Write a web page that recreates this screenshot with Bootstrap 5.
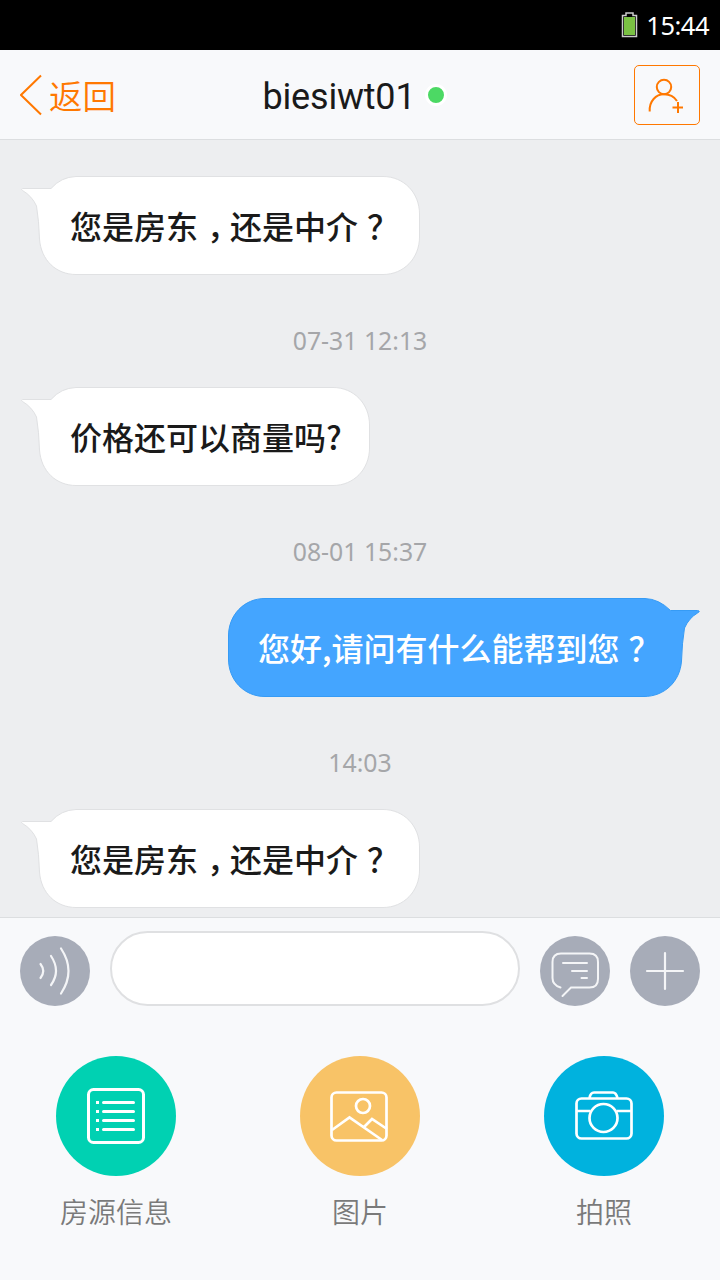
<!DOCTYPE html>
<html lang="zh-CN">
<head>
<meta charset="utf-8">
<meta name="viewport" content="width=device-width, initial-scale=1">
<title>biesiwt01</title>
<link rel="stylesheet" href="https://cdn.jsdelivr.net/npm/bootstrap@5.3.0/dist/css/bootstrap.min.css">
<style>
body{font-family:"Noto Sans","Noto Sans CJK SC",sans-serif;color:#1a1a1a;background:#f8f9fb}
.screen{width:720px;height:1280px}
.status{height:50px;font-size:25.5px;line-height:50px;padding-right:11px}
.clock{letter-spacing:-.5px}
.topbar{height:90px;background:#f8f9fb;border-bottom:1px solid #dcdee0}
.side{width:120px}
.back{color:#ff7800;font:350 33.5px/1 "Noto Sans CJK SC",sans-serif}
.back span{margin-left:3px}
.who{font:36px/1 Roboto,sans-serif;padding-top:4px;letter-spacing:-.2px}
.online{width:22px;height:22px;background:#4cd964;border:3px solid #fff;margin-left:10px}
.title{margin-right:10px}
.addbtn{width:66px;height:60px;border:1px solid #ff7800;border-radius:5px;color:#ff7800}
.chat{height:777px;background:#edeef0;padding:36px 20px 0}
.bubble{height:99px;font:500 32px/99px "Noto Sans CJK SC",sans-serif;white-space:nowrap}
.bubble svg{z-index:0}
.bubble>span{position:relative;z-index:1}
.bubble-in{padding-left:50px}
.bubble-out{padding-left:30px;color:#fff;width:472px}
.mid{font-feature-settings:"halt";margin:0 7px 0 9px}
.ask{margin-left:9px}
.stamp{height:112px;font-size:24.800px;line-height:130px;color:#a5a6a9}
.composer{height:106px;background:#f8f9fb;border-top:1px solid #dcdee0;padding:0 20px}
.tool{width:70px;height:70px;background:#a7acb8}
.entry{width:410px;height:75px;border:2px solid #dfe0e2;border-radius:38px;background:#fff;margin-bottom:4px}
.actions{padding:33px 56px 0}
.action{width:120px}
.disc{width:120px;height:120px}
.caption-text{font:350 28px/40px "Noto Sans CJK SC",sans-serif;color:#7a7a7a;margin-top:15px;white-space:nowrap}
svg{display:block;fill:none}
</style>
</head>
<body>
<div class="screen d-flex flex-column overflow-hidden">
  <div class="status bg-black text-white d-flex align-items-center justify-content-end flex-shrink-0">
    <svg class="me-2" width="17" height="26" viewBox="0 0 17 26"><path d="M1.500 3.5H5V1H12V3.5H15.500V24.5H1.500Z" stroke="#ccc" stroke-width="1.5"/><path d="M3 5H14V23H3Z" fill="#7ac143"/></svg>
    <span class="clock">15:44</span>
  </div>
  <nav class="topbar d-flex align-items-center justify-content-between flex-shrink-0 px-3">
    <div class="side back d-flex align-items-center">
      <svg width="26" height="42" viewBox="0 0 26 42" class="ms-1" stroke="#ff7800" stroke-width="2"><path d="M21 1.5 1 21 21 40.5"/></svg><span class="text-nowrap">返回</span>
    </div>
    <div class="title d-flex align-items-center"><span class="who">biesiwt01</span><span class="online rounded-circle"></span></div>
    <div class="side d-flex justify-content-end pe-1">
      <div class="addbtn"><svg width="64" height="58" viewBox="0 0 64 58" stroke="currentColor" stroke-width="2"><circle cx="29" cy="21" r="7.2"/><path d="M14.7 45.5C14 35 21 28.3 29 28.3 34 28.3 39 30.5 42 35M43 36V47M37.5 41.5H48"/></svg></div>
    </div>
  </nav>
  <main class="chat overflow-hidden flex-shrink-0">
    <div class="bubble bubble-in position-relative">
      <svg class="position-absolute top-0 start-0" width="400" height="99"><path d="M2.5 12.5H31Q41 1 56 .5H363C384 .5 399.5 17 399.5 38V61C399.5 82 384 98.5 363 98.5H56C36 98.5 21 84 19.5 63Q19 45 16.5 30Q12 20 2.5 14.5Q.5 13 2.5 12.5Z" fill="#fff" stroke="#e0e1e3"/></svg>
      <span>您是房东<span class="mid">，</span>还是中介<span class="ask">？</span></span>
    </div>
    <div class="stamp text-center">07-31 12:13</div>
    <div class="bubble bubble-in position-relative">
      <svg class="position-absolute top-0 start-0" width="350" height="99"><path d="M2.5 12.5H31Q41 1 56 .5H313C334 .5 349.5 17 349.5 38V61C349.5 82 334 98.5 313 98.5H56C36 98.5 21 84 19.5 63Q19 45 16.5 30Q12 20 2.5 14.5Q.5 13 2.5 12.5Z" fill="#fff" stroke="#e0e1e3"/></svg>
      <span>价格还可以商量吗?</span>
    </div>
    <div class="stamp text-center">08-01 15:37</div>
    <div class="bubble bubble-out position-relative ms-auto">
      <svg class="position-absolute top-0 start-0" width="472" height="99"><path d="M469.500 12.500H442.500Q431 1 417 .5H37C16 .5 .5 17 .5 38V61C.5 82 16 98.500 37 98.500H416C436 98.500 452 84 453.500 63Q454 45 456.500 30Q461 20 469.500 15Q473 13 469.500 12.500Z" fill="#44a5ff" stroke="#369bf5"/></svg>
      <span>您好,请问有什么能帮到您<span class="ask">？</span></span>
    </div>
    <div class="stamp text-center">14:03</div>
    <div class="bubble bubble-in position-relative">
      <svg class="position-absolute top-0 start-0" width="400" height="99"><path d="M2.5 12.5H31Q41 1 56 .5H363C384 .5 399.5 17 399.5 38V61C399.5 82 384 98.5 363 98.5H56C36 98.5 21 84 19.5 63Q19 45 16.5 30Q12 20 2.5 14.5Q.5 13 2.5 12.5Z" fill="#fff" stroke="#e0e1e3"/></svg>
      <span>您是房东<span class="mid">，</span>还是中介<span class="ask">？</span></span>
    </div>
  </main>
  <div class="composer d-flex align-items-center justify-content-between flex-shrink-0">
    <div class="tool rounded-circle"><svg width="70" height="70" stroke="#f4f5f7" stroke-width="2.2" stroke-linecap="round"><path d="M20.500 28Q26 35 20.500 42M31 20Q41 35 31 49M41 12.500Q56 35 41 57.500"/></svg></div>
    <div class="entry"></div>
    <div class="tool rounded-circle"><svg width="70" height="70" stroke="#f4f5f7" stroke-width="2" stroke-linecap="round"><path d="M20.500 51.500Q12.500 49 12.500 42V26Q12.500 17.500 21 17.500H49.500Q58 17.500 58 26V43Q58 51.500 49.500 51.500H31L22.500 60M23 27H47M32 35H47M41.500 42H47"/></svg></div>
    <div class="tool rounded-circle"><svg width="70" height="70" stroke="#f4f5f7" stroke-width="2.200" stroke-linecap="round"><path d="M35 17V53M17 35H53"/></svg></div>
  </div>
  <div class="actions d-flex justify-content-between">
    <div class="action d-flex flex-column align-items-center">
      <div class="disc rounded-circle" style="background:#00d1b2"><svg width="120" height="120" stroke="#fff" stroke-width="3" stroke-linecap="round"><rect x="32.500" y="33.500" width="55" height="53" rx="5"/><path d="M47.500 46.500H77.500M47.500 55.500H77.500M47.500 64.500H77.500M47.500 73.500H77.500"/><path stroke-linecap="butt" d="M40 46.500H43M40 55.500H43M40 64.500H43M40 73.500H43"/></svg></div>
      <div class="caption-text">房源信息</div>
    </div>
    <div class="action d-flex flex-column align-items-center">
      <div class="disc rounded-circle" style="background:#f8c367"><svg width="120" height="120" stroke="#fff" stroke-width="2.700"><rect x="31.500" y="36.500" width="55" height="48" rx="5"/><circle cx="63" cy="50" r="7"/><path d="M32 74 49.500 61.500 82 84M64 71 72 63 87 73"/></svg></div>
      <div class="caption-text">图片</div>
    </div>
    <div class="action d-flex flex-column align-items-center">
      <div class="disc rounded-circle" style="background:#00b2de"><svg width="120" height="120" stroke="#fff" stroke-width="2.700"><rect x="32.500" y="42.500" width="55" height="40" rx="5"/><circle cx="59.500" cy="62" r="14"/><path d="M45.500 42Q46.500 36.500 50 36.500H69Q72 36.500 73.500 42M33 55H46M73 55H87"/></svg></div>
      <div class="caption-text">拍照</div>
    </div>
  </div>
</div>
<script src="https://cdn.jsdelivr.net/npm/bootstrap@5.3.0/dist/js/bootstrap.bundle.min.js"></script>
</body>
</html>
